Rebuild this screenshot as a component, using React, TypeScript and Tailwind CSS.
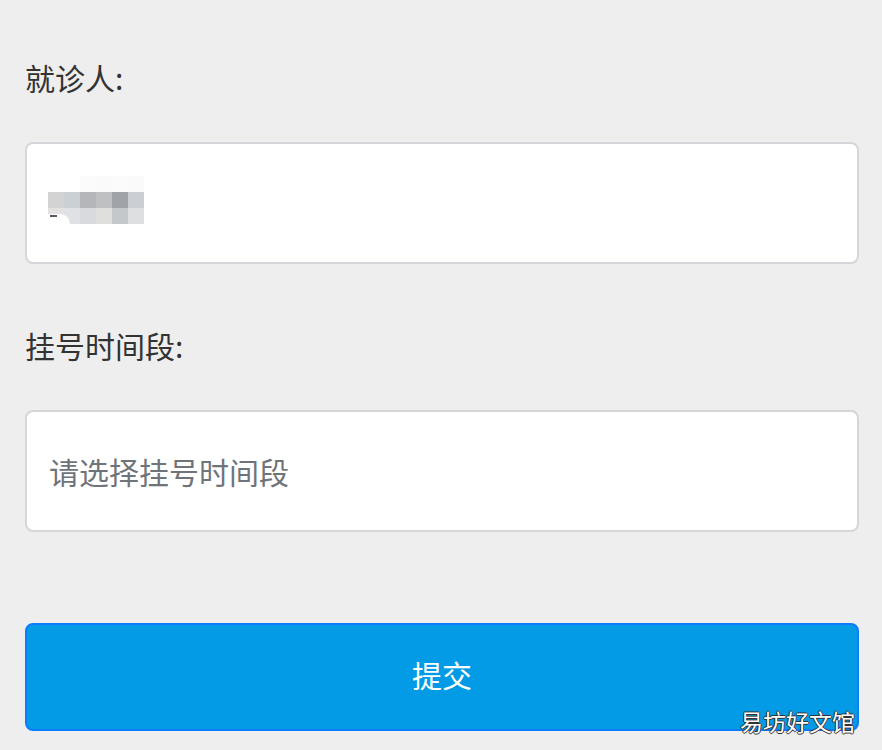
const mosaic = [
  ["#ffffff", "#ffffff", "#fbfbfb", "#fafafa", "#fbfbfb", "#f9f9f9"],
  ["#d3d3d3", "#cbd0d4", "#b5b6b9", "#bfc0c2", "#a0a3a7", "#cbced2"],
  ["#e3e2e0", "#e0e1e5", "#d9dadd", "#dfdfdd", "#c4c8cb", "#dedfe1"],
];

function Label({ text }: { text: string }) {
  return (
    <div className="h-10 text-[30px] leading-10 text-[#333333]">{text}</div>
  );
}

export default function App() {
  return (
    <div
      className="relative h-[750px] w-[882px] overflow-hidden bg-[#eeeeee] pl-[25px] pr-[23px] pt-[57px]"
      style={{ fontFamily: '"Noto Sans CJK SC", "Noto Sans", sans-serif' }}
    >
      <Label text="就诊人:" />

      {/* patient (blurred) */}
      <div className="mt-[45px] flex h-[122px] items-center rounded-lg border-2 border-[#d4d6da] bg-white pl-[21px]">
        <div className="relative -mt-[6px]">
          {mosaic.map((row, r) => (
            <div key={r} className="flex">
              {row.map((c, i) => (
                <div key={i} className="h-4 w-4" style={{ background: c }} />
              ))}
            </div>
          ))}
          <div className="absolute bottom-0 left-0 h-[10px] w-[22px] rounded-tr-full bg-white" />
          <div className="absolute bottom-[7px] left-[2px] h-[2px] w-[7px] bg-[#555a66]" />
        </div>
      </div>

      <div className="mt-[61px]">
        <Label text="挂号时间段:" />
      </div>

      <div className="mt-[45px] flex h-[122px] items-center rounded-lg border-2 border-[#d4d6da] bg-white pl-[22px]">
        <span className="text-[30px] leading-none text-[#6f747a]">
          请选择挂号时间段
        </span>
      </div>

      <button className="mt-[91px] flex h-[108px] w-full items-center justify-center rounded-lg border-2 border-[#0d7bff] bg-[#039be5] pb-[6px] text-[30px] text-white">
        提交
      </button>

      <div
        className="absolute bottom-[17px] right-[27px] text-[23px] leading-none text-white"
        style={{
          textShadow:
            "1px 0 0 #333, -1px 0 0 #333, 0 1px 0 #333, 0 -1px 0 #333",
        }}
      >
        易坊好文馆
      </div>
    </div>
  );
}
